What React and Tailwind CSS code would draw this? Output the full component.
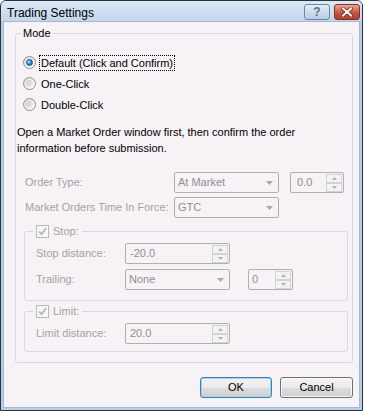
import React from 'react'

function Radio({ checked }) {
  return (
    <span className="flex h-[13px] w-[13px] shrink-0 items-center justify-center rounded-full border border-[#8e8f8f] bg-[linear-gradient(135deg,#dcdcdc,#ffffff)]">
      {checked ? (
        <span className="h-[7px] w-[7px] rounded-full border border-[#1d4f86] bg-[radial-gradient(circle_at_35%_35%,#b5e3ff,#2e7fd0_55%,#0f4382)]" />
      ) : (
        <span className="h-[7px] w-[7px] rounded-full bg-[linear-gradient(135deg,#c8c8c8,#f2f2f2)]" />
      )}
    </span>
  )
}

function CheckBox() {
  return (
    <span className="flex h-[13px] w-[13px] shrink-0 items-center justify-center border border-[#b9b9b9] bg-[#f6f6f6]">
      <svg width="9" height="9" viewBox="0 0 9 9">
        <path d="M1 4.5 L3.5 7.2 L8 1.2" fill="none" stroke="#b3b3b3" strokeWidth="1.7" />
      </svg>
    </span>
  )
}

function Combo({ value, className }) {
  return (
    <div className={`flex h-[21px] items-center justify-between rounded-[2px] border border-[#b0b0b0] pl-[3px] pr-[5px] text-[#8f8f8f] ${className}`}>
      <span>{value}</span>
      <svg width="7" height="4" viewBox="0 0 7 4">
        <path d="M0 0 H7 L3.5 4 Z" fill="#a8a8a8" />
      </svg>
    </div>
  )
}

function SpinBtn({ up }) {
  return (
    <span className="flex h-[9px] w-[16px] items-center justify-center border border-[#d2d2d2] bg-[#f3f3f3]">
      <svg width="5" height="3" viewBox="0 0 5 3">
        <path d={up ? 'M0 3 H5 L2.5 0 Z' : 'M0 0 H5 L2.5 3 Z'} fill="#b0b0b0" />
      </svg>
    </span>
  )
}

function Spin({ value, className, pad }) {
  return (
    <div className={`flex h-[21px] items-center rounded-[2px] border border-[#b0b0b0] pr-[1px] text-[#8f8f8f] ${pad} ${className}`}>
      <span className="flex-1">{value}</span>
      <div className="flex flex-col">
        <SpinBtn up />
        <SpinBtn />
      </div>
    </div>
  )
}

function TitleBar() {
  return (
    <div className="flex h-[20px] rounded-t-[5px] bg-[linear-gradient(#dce8f5,#c2d6eb)] pl-[6px] pr-[2px]">
      <span className="flex-1 pt-[5px] text-[12px] leading-[14px] text-black">Trading Settings</span>
      <div className="mt-[3px] flex gap-[4px]">
        <span className="flex h-[16px] w-[26px] items-center justify-center rounded-[3px] border border-[#6f87a3] bg-[linear-gradient(#e4edf7,#b8cbe0)] text-[12px] font-bold leading-[12px] text-[#5d6f86]">
          ?
        </span>
        <span className="flex h-[16px] w-[26px] items-center justify-center rounded-[3px] border border-[#7c3328] bg-[linear-gradient(#eaa79b,#c9533f_55%,#b8402c)]">
          <svg width="12" height="10" viewBox="0 0 12 10">
            <path d="M2 1.5 L10 8.5 M10 1.5 L2 8.5" stroke="#6b2a20" strokeWidth="3.6" strokeLinecap="square" />
            <path d="M2 1.5 L10 8.5 M10 1.5 L2 8.5" stroke="#ffffff" strokeWidth="2" strokeLinecap="square" />
          </svg>
        </span>
      </div>
    </div>
  )
}

export default function App() {
  const radios = [
    { label: 'Default (Click and Confirm)', checked: true },
    { label: 'One-Click', checked: false },
    { label: 'Double-Click', checked: false },
  ]

  return (
    <div className="h-[411px] w-[365px] bg-white font-['Liberation_Sans',Arial,sans-serif] text-[11px] leading-[13px] text-black">
      <div className="flex h-[411px] w-[363px] flex-col rounded-t-[6px] border border-[#2d333c] bg-[#b8cfe8]">
        <TitleBar />
        <div className="flex flex-1 flex-col px-[2px] pb-[2px]">
          <div className="flex flex-1 flex-col border border-[#a4b9d1] bg-[#f6f2f6]">
            <fieldset className="ml-[11px] mt-[5px] w-[338px] rounded-[3px] border border-[#d3dbe2] pb-[10px]">
              <legend className="ml-[5px] px-[2px]">Mode</legend>

              <div className="mt-[12px] flex flex-col pl-[7px]">
                {radios.map((r) => (
                  <div key={r.label} className="flex h-[21px] items-center">
                    <Radio checked={r.checked} />
                    <span className={`ml-[3px] border px-[1px] leading-[14px] ${r.checked ? 'border-dotted border-black' : 'border-transparent'}`}>
                      {r.label}
                    </span>
                  </div>
                ))}
              </div>

              <p className="mt-[9px] pl-[1px] leading-[16px]">
                Open a Market Order window first, then confirm the order
                <br />
                information before submission.
              </p>

              <div className="mt-[16px] flex h-[21px] items-center pl-[9px]">
                <span className="w-[149px] text-[#a3a3a3]">Order Type:</span>
                <Combo value="At Market" className="w-[105px]" />
                <Spin value="0.0" className="ml-[11px] w-[54px]" pad="pl-[6px]" />
              </div>
              <div className="mt-[4px] flex h-[21px] items-center pl-[9px]">
                <span className="w-[149px] text-[#a3a3a3]">Market Orders Time In Force:</span>
                <Combo value="GTC" className="w-[105px]" />
              </div>

              <fieldset className="ml-[8px] mt-[7px] w-[324px] rounded-[3px] border border-[#d3dbe2] pb-[10px]">
                <legend className="ml-[8px] flex items-center px-[3px]">
                  <CheckBox />
                  <span className="ml-[4px] text-[#a3a3a3]">Stop:</span>
                </legend>
                <div className="mt-[5px] flex h-[21px] items-center pl-[11px]">
                  <span className="w-[89px] text-[#a3a3a3]">Stop distance:</span>
                  <Spin value="-20.0" className="w-[105px]" pad="pl-[4px]" />
                </div>
                <div className="mt-[5px] flex h-[21px] items-center pl-[11px]">
                  <span className="w-[89px] text-[#a3a3a3]">Trailing:</span>
                  <Combo value="None" className="w-[105px]" />
                  <Spin value="0" className="ml-[18px] w-[45px]" pad="pl-[3px]" />
                </div>
              </fieldset>

              <fieldset className="ml-[8px] mt-[4px] w-[324px] rounded-[3px] border border-[#d3dbe2] pb-[7px]">
                <legend className="ml-[8px] flex items-center px-[3px]">
                  <CheckBox />
                  <span className="ml-[4px] text-[#a3a3a3]">Limit:</span>
                </legend>
                <div className="mt-[5px] flex h-[21px] items-center pl-[11px]">
                  <span className="w-[89px] text-[#a3a3a3]">Limit distance:</span>
                  <Spin value="20.0" className="w-[105px]" pad="pl-[4px]" />
                </div>
              </fieldset>
            </fieldset>

            <div className="ml-[11px] mt-[14px] flex w-[338px] justify-end gap-[8px]">
              <button className="h-[21px] w-[72px] rounded-[3px] border border-[#3c7fb1] bg-[linear-gradient(#f2f2f2_0%,#ebebeb_50%,#dddddd_50%,#cfcfcf_100%)] leading-[13px] shadow-[inset_0_0_0_1px_#9fd6f2]">
                OK
              </button>
              <button className="h-[21px] w-[73px] rounded-[3px] border border-[#707070] bg-[linear-gradient(#f2f2f2_0%,#ebebeb_50%,#dddddd_50%,#cfcfcf_100%)] leading-[13px] shadow-[inset_0_0_0_1px_#fbfbfb]">
                Cancel
              </button>
            </div>
          </div>
        </div>
      </div>
    </div>
  )
}
